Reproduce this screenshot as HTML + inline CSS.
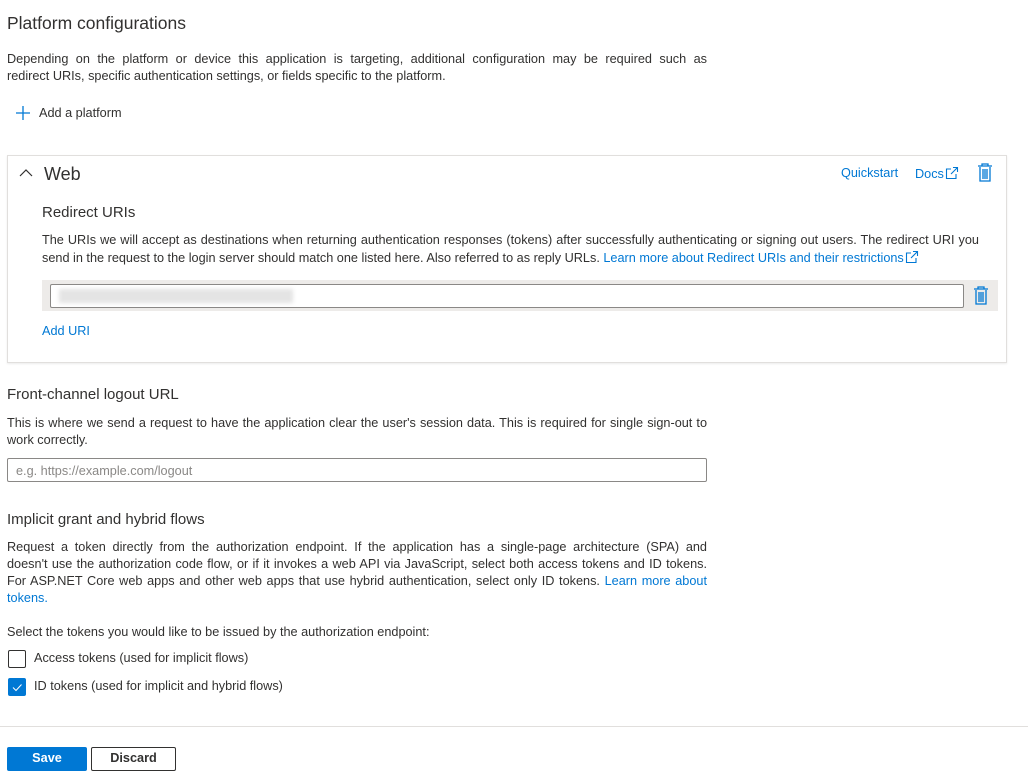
<!DOCTYPE html>
<html><head><meta charset="utf-8"><style>
*{box-sizing:border-box;margin:0;padding:0}
body{width:1028px;height:782px;background:#fff;font-family:"Liberation Sans",sans-serif;color:#323130;font-size:12.7px;position:relative;overflow:hidden}
.a{position:absolute;white-space:nowrap}
.j{position:absolute;text-align:justify;text-align-last:justify;white-space:nowrap;overflow:hidden}
.l{color:#0078d4}
.ic{display:inline-block;vertical-align:-2px;margin-left:1px}
</style></head><body>
<div class="a" style="left:7px;top:13px;font-size:17.5px">Platform configurations</div>
<div class="j" style="left:7px;top:52px;width:700px">Depending on the platform or device this application is targeting, additional configuration may be required such as</div>
<div class="a" style="left:7px;top:69px">redirect URIs, specific authentication settings, or fields specific to the platform.</div>
<svg class="a" style="left:15px;top:105px" width="16" height="16"><path d="M8 1v14M1 8h14" stroke="#0078d4" stroke-width="1.3"/></svg>
<div class="a" style="left:39px;top:106px">Add a platform</div>

<div class="a" style="left:7px;top:155px;width:1000px;height:208px;border:1px solid #e1dfdd;box-shadow:0 1px 2px rgba(0,0,0,.08)"></div>
<svg class="a" style="left:19px;top:168px" width="14" height="10"><path d="M1 8l6-6 6 6" fill="none" stroke="#323130" stroke-width="1.2"/></svg>
<div class="a" style="left:44px;top:164px;font-size:18px">Web</div>
<div class="a l" style="left:841px;top:166px">Quickstart</div>
<div class="a l" style="left:915px;top:166px">Docs<svg class="ic" width="14" height="14"><path d="M6 3H1.5v9.5H11V8M8 1.5h4.5V6M12.5 1.5L6 8" fill="none" stroke="#0078d4" stroke-width="1.1"/></svg></div>
<svg class="a" style="left:977px;top:163px" width="16" height="19"><path d="M1 3h14M5 3V1h6v2M3 4v14h10V4M6 6v10M8 6v10M10 6v10" fill="none" stroke="#0078d4" stroke-width="1.3"/></svg>
<div class="a" style="left:42px;top:204px;font-size:15px">Redirect URIs</div>
<div class="j" style="left:42px;top:233px;width:937px">The URIs we will accept as destinations when returning authentication responses (tokens) after successfully authenticating or signing out users. The redirect URI you</div>
<div class="a" style="left:42px;top:250px">send in the request to the login server should match one listed here. Also referred to as reply URLs. <span class="l">Learn more about Redirect URIs and their restrictions<svg class="ic" width="14" height="14"><path d="M6 3H1.5v9.5H11V8M8 1.5h4.5V6M12.5 1.5L6 8" fill="none" stroke="#0078d4" stroke-width="1.1"/></svg></span></div>
<div class="a" style="left:42px;top:280px;width:956px;height:31px;background:#edebe9"></div>
<div class="a" style="left:50px;top:284px;width:914px;height:24px;background:#fff;border:1px solid #8a8886;border-radius:2px"></div>
<div class="a" style="left:59px;top:289px;width:234px;height:14px;background:#e4e4e4;filter:blur(2px)"></div>
<svg class="a" style="left:973px;top:286px" width="16" height="19"><path d="M1 3h14M5 3V1h6v2M3 4v14h10V4M6 6v10M8 6v10M10 6v10" fill="none" stroke="#0078d4" stroke-width="1.3"/></svg>
<div class="a l" style="left:42px;top:324px">Add URI</div>

<div class="a" style="left:7px;top:386px;font-size:15px">Front-channel logout URL</div>
<div class="j" style="left:7px;top:416px;width:700px">This is where we send a request to have the application clear the user's session data. This is required for single sign-out to</div>
<div class="a" style="left:7px;top:433px">work correctly.</div>
<div class="a" style="left:7px;top:458px;width:700px;height:24px;border:1px solid #8a8886;border-radius:2px;padding:5px 8px;color:#8a8886">e.g. https://example.com/logout</div>

<div class="a" style="left:7px;top:511px;font-size:15px">Implicit grant and hybrid flows</div>
<div class="j" style="left:7px;top:540px;width:700px">Request a token directly from the authorization endpoint. If the application has a single-page architecture (SPA) and</div>
<div class="j" style="left:7px;top:557px;width:700px">doesn't use the authorization code flow, or if it invokes a web API via JavaScript, select both access tokens and ID tokens.</div>
<div class="j" style="left:7px;top:574px;width:700px">For ASP.NET Core web apps and other web apps that use hybrid authentication, select only ID tokens. <span class="l">Learn more about</span></div>
<div class="a l" style="left:7px;top:591px">tokens.</div>
<div class="a" style="left:7px;top:625px">Select the tokens you would like to be issued by the authorization endpoint:</div>
<div class="a" style="left:8px;top:650px;width:18px;height:18px;border:1px solid #323130;border-radius:2px"></div>
<div class="a" style="left:34px;top:651px">Access tokens (used for implicit flows)</div>
<div class="a" style="left:8px;top:678px;width:18px;height:18px;background:#0078d4;border-radius:2px"></div>
<svg class="a" style="left:8px;top:678px" width="18" height="18"><path d="M5 9.5l3 3 5.5-6" fill="none" stroke="#fff" stroke-width="1"/></svg>
<div class="a" style="left:34px;top:679px">ID tokens (used for implicit and hybrid flows)</div>

<div class="a" style="left:0;top:726px;width:1028px;height:1px;background:#e1dfdd"></div>
<div class="a" style="left:7px;top:747px;width:80px;height:24px;background:#0078d4;border-radius:2px;color:#fff;font-weight:bold;text-align:center;line-height:23px">Save</div>
<div class="a" style="left:91px;top:747px;width:85px;height:24px;border:1px solid #323130;border-radius:2px;font-weight:bold;text-align:center;line-height:21px">Discard</div>
</body></html>
